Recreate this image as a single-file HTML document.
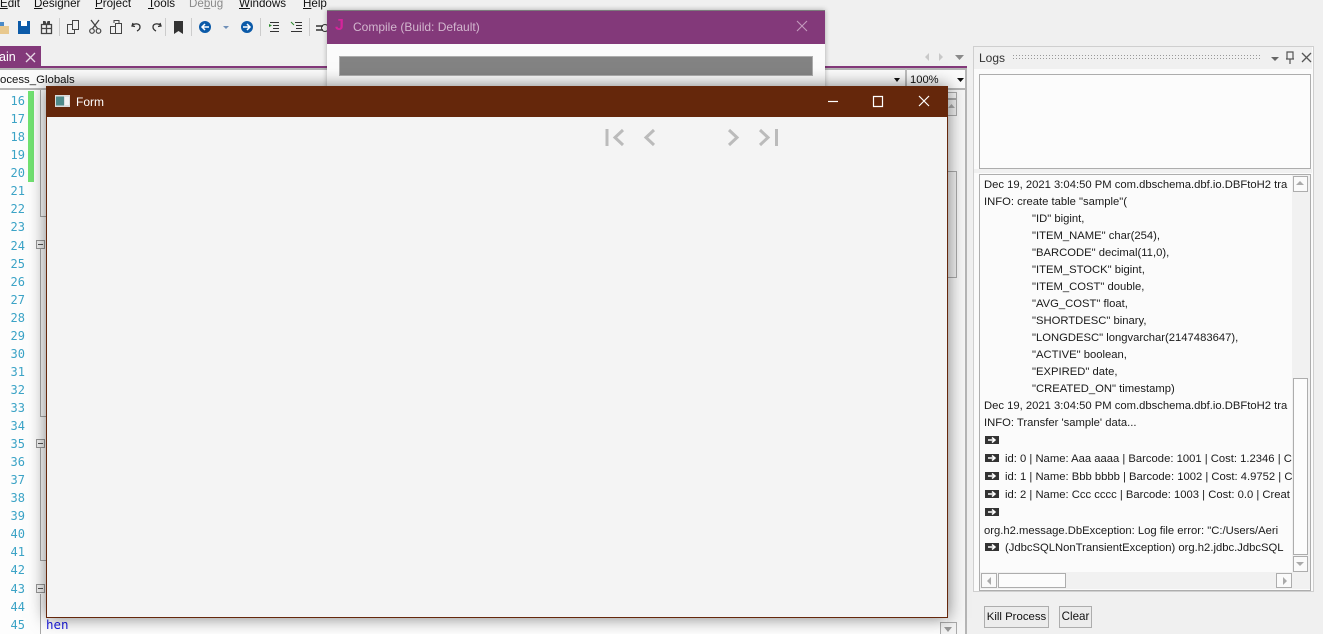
<!DOCTYPE html>
<html><head><meta charset="utf-8">
<style>
html,body{margin:0;padding:0;width:1323px;height:634px;overflow:hidden;background:#f0f0f0}
body{position:relative;font-family:"Liberation Sans",sans-serif;font-size:11.6px;color:#111}
.a,.t{position:absolute}
.t{white-space:pre;line-height:16px}
.n{position:absolute;left:0;width:25px;text-align:right;font-family:"DejaVu Sans Mono","Liberation Mono",monospace;font-size:12px;line-height:16px;color:#3ba3c6}
.l{position:absolute;white-space:pre;font-size:11.25px;line-height:16px;color:#1a1a1a}
.k{position:absolute;left:985px;width:14px;height:8px;background:#333;color:#fff}
.k svg{display:block}
.fold{position:absolute;left:36px;width:7px;height:7px;border:1px solid #999;background:#f4f4f4}
.fold:after{content:"";position:absolute;left:1px;right:1px;top:3px;height:1px;background:#555}
.v{position:absolute;left:40px;width:1px;background:#a8a8a8}
.h{position:absolute;left:40px;width:6px;height:1px;background:#a8a8a8}
</style></head><body>

<!-- menu -->
<div class="t" style="left:0;top:-4px"><u>E</u>dit</div>
<div class="t" style="left:34px;top:-4px"><u>D</u>esigner</div>
<div class="t" style="left:95px;top:-4px"><u>P</u>roject</div>
<div class="t" style="left:148px;top:-4px"><u>T</u>ools</div>
<div class="t" style="left:189px;top:-4px;color:#8a8a8a">De<u>b</u>ug</div>
<div class="t" style="left:239px;top:-4px"><u>W</u>indows</div>
<div class="t" style="left:303px;top:-4px"><u>H</u>elp</div>

<!-- toolbar -->
<svg class="a" style="left:0;top:16px" width="330" height="24" viewBox="0 0 330 24">
<path d="M0 10h9v8H0z" fill="#e8c88e"/><path d="M0 6h4v4H0z" fill="#4a8ac8"/>
<path d="M18 5h12v13H18z" fill="#0b5aa8"/><path d="M21 5h6v5h-6z" fill="#fff"/>
<path d="M41.500 8.500h10v9h-10zM46.500 8.500v9M41.500 12.500h10" fill="none" stroke="#444" stroke-width="1.300"/><path d="M43 5h2.500l1 3h-3.500zM50 5h-2.500l-1 3h3.500z" fill="#444"/>
<path d="M67.500 8.500h7v9h-7z" fill="none" stroke="#444"/><path d="M72.500 4.500h6v9h-6z" fill="#f0f0f0" stroke="#444"/>
<path d="M91 4l6.500 8.500M99 4l-6.500 8.500" stroke="#444" stroke-width="1.300"/><circle cx="92" cy="15" r="2.300" fill="none" stroke="#444" stroke-width="1.200"/><circle cx="98.500" cy="15" r="2.300" fill="none" stroke="#444" stroke-width="1.200"/>
<path d="M110.500 10.500h5v7h-5zM115.500 7.500h6v10h-6z" fill="none" stroke="#444"/><path d="M114 7V4.500h5V7" fill="none" stroke="#444"/>
<path d="M133 7l-1 3 3 .5M132 10c2-3 8-3 8 1 0 2-1 3-3 4" fill="none" stroke="#333" stroke-width="1.300"/>
<path d="M160 7l1 3-3 .5M161 10c-2-3-8-3-8 1 0 2 1 3 3 4" fill="none" stroke="#333" stroke-width="1.300"/>
<path d="M59.500 2v18M165.500 2v18M191.500 2v18M260.500 2v18M309.500 2v18" stroke="#ccc"/>
<path d="M174 5h9v13l-4.500-3-4.500 3z" fill="#333"/>
<circle cx="205" cy="11" r="6" fill="#0b5aa8"/><path d="M209 11h-7M205 8l-3 3 3 3" fill="none" stroke="#fff" stroke-width="1.500"/>
<path d="M223 10h6l-3 3z" fill="#6f8fb8"/>
<circle cx="247" cy="11" r="6" fill="#0b5aa8"/><path d="M243 11h7M247 8l3 3-3 3" fill="none" stroke="#fff" stroke-width="1.500"/>
<path d="M270 6.500h9M273 9.500h6M273 12.500h6M270 15.500h9" stroke="#333"/><path d="M269 8l3 1.500-3 1.500z" fill="#2a8a2a"/>
<path d="M295 6.500h7M296 9.500h6M296 12.500h6M291 15.500h11" stroke="#333"/><path d="M291 6l3 3" stroke="#2a8a2a"/>
<path d="M316 10h7M316 14h7" stroke="#333" stroke-width="1.500"/><circle cx="325" cy="12" r="3.500" fill="none" stroke="#333"/>
</svg>

<!-- tab strip -->
<div class="a" style="left:0;top:46px;width:41px;height:20px;background:#83397a"></div>
<div class="t" style="left:-1px;top:49px;color:#fff;font-size:12.5px">ain</div>
<svg class="a" style="left:25px;top:52px" width="11" height="11"><path d="M1 1l9 9M10 1l-9 9" stroke="#e8d8e6" stroke-width="1.300"/></svg>
<div class="a" style="left:0;top:66px;width:967px;height:2px;background:#83397a"></div>
<div class="a" style="left:0;top:68px;width:967px;height:2px;background:#b5b5b5"></div>
<svg class="a" style="left:920px;top:50px" width="46" height="14"><path d="M9 3v8l-4-4zM19 3v8l4-4z" fill="#c8c8c8"/><path d="M35 5h9l-4.500 5z" fill="#8a8a8a"/></svg>

<!-- combo row -->
<div class="a" style="left:0;top:70px;width:967px;height:20px;background:#fbfbfb"></div>
<div class="t" style="left:0;top:72px;font-size:11.4px">ocess_Globals</div>
<div class="a" style="left:905px;top:69px;width:2px;height:21px;background:#bdbdbd"></div>
<div class="t" style="left:910px;top:72px;font-size:11.2px">100%</div>
<svg class="a" style="left:892px;top:76px" width="76" height="8"><path d="M2 2h6l-3 4zM65 2h7l-3.500 4z" fill="#111"/></svg>

<!-- editor -->
<div class="a" style="left:0;top:90px;width:967px;height:544px;background:#fdfdfd"></div>
<div class="a" style="left:0;top:88px;width:967px;height:2px;background:#b5b5b5"></div>
<div class="a" style="left:28px;top:91px;width:6px;height:91px;background:#72e272"></div>
<div class="v" style="top:90px;height:127px"></div>
<div class="h" style="top:216px"></div>
<div class="v" style="top:249px;height:168px"></div>
<div class="h" style="top:416px"></div>
<div class="v" style="top:448px;height:113px"></div>
<div class="h" style="top:560px"></div>
<div class="v" style="top:594px;height:40px"></div>
<div class="fold" style="top:240px"></div>
<div class="fold" style="top:439px"></div>
<div class="fold" style="top:584px"></div>
<div class="n" style="top:93px">16</div><div class="n" style="top:111px">17</div><div class="n" style="top:129px">18</div><div class="n" style="top:147px">19</div><div class="n" style="top:165px">20</div><div class="n" style="top:183px">21</div><div class="n" style="top:201px">22</div><div class="n" style="top:219px">23</div><div class="n" style="top:238px">24</div><div class="n" style="top:256px">25</div><div class="n" style="top:274px">26</div><div class="n" style="top:292px">27</div><div class="n" style="top:310px">28</div><div class="n" style="top:328px">29</div><div class="n" style="top:346px">30</div><div class="n" style="top:364px">31</div><div class="n" style="top:382px">32</div><div class="n" style="top:400px">33</div><div class="n" style="top:418px">34</div><div class="n" style="top:436px">35</div><div class="n" style="top:454px">36</div><div class="n" style="top:472px">37</div><div class="n" style="top:490px">38</div><div class="n" style="top:508px">39</div><div class="n" style="top:526px">40</div><div class="n" style="top:544px">41</div><div class="n" style="top:562px">42</div><div class="n" style="top:581px">43</div><div class="n" style="top:599px">44</div><div class="n" style="top:617px">45</div>
<div class="t" style="left:46px;top:617px;font-family:'DejaVu Sans Mono',monospace;font-size:12.5px;color:#1a1ae0">hen</div>

<!-- editor right scrollbar area -->
<div class="a" style="left:947px;top:90px;width:20px;height:544px;background:#f6f6f6"></div>
<div class="a" style="left:940px;top:92px;width:15px;height:5px;border:1px solid #aaa;background:#f4f4f4"></div>
<div class="a" style="left:940px;top:99px;width:15px;height:15px;border:1px solid #aaa;background:#efefef"></div>
<svg class="a" style="left:948px;top:102px" width="8" height="8"><path d="M0 6h7l-3.500-4z" fill="#aaa"/></svg>
<div class="a" style="left:940px;top:171px;width:15px;height:105px;border:1px solid #aaa;background:#f1f1f1"></div>
<div class="a" style="left:940px;top:622px;width:15px;height:12px;border:1px solid #aaa;background:#f4f4f4"></div>
<svg class="a" style="left:943px;top:626px" width="10" height="8"><path d="M1 1h8L5 6z" fill="#999"/></svg>
<div class="a" style="left:965px;top:68px;width:2px;height:566px;background:#b5b5b5"></div>

<!-- Compile window -->
<div class="a" style="left:327px;top:10px;width:498px;height:85px;background:#fbfbfb;box-shadow:0 0 5px rgba(0,0,0,.3)"></div>
<div class="a" style="left:327px;top:10px;width:498px;height:34px;background:#83397a;border-top:1px solid #7c7c7c;box-sizing:border-box"></div>
<div class="t" style="left:335px;top:18px;color:#d4259b;font-weight:bold;font-size:16px">J</div>
<div class="t" style="left:353px;top:19px;color:#d2b6ce;font-size:12px">Compile (Build: Default)</div>
<svg class="a" style="left:796px;top:20px" width="12" height="12"><path d="M1 1l10 10M11 1L1 11" stroke="#c39abd" stroke-width="1.100"/></svg>
<div class="a" style="left:339px;top:56px;width:474px;height:20px;background:#838383;border:1px solid #adadad;box-sizing:border-box"></div>

<!-- Logs panel -->
<div class="a" style="left:973px;top:46px;width:339px;height:544px;background:#fbfbfb;border:1px solid #cfcfcf"></div>
<div class="a" style="left:974px;top:47px;width:338px;height:22px;background:#f0f0f0"></div>
<div class="t" style="left:979px;top:50px;font-size:12px;color:#333">Logs</div>
<svg class="a" style="left:1013px;top:55px" width="249" height="6"><defs><pattern id="d" width="3" height="3" patternUnits="userSpaceOnUse"><rect width="1" height="1" fill="#999"/></pattern></defs><rect width="249" height="6" fill="url(#d)"/></svg>
<svg class="a" style="left:1268px;top:50px" width="44" height="16"><path d="M3 7h8l-4 4z" fill="#666"/><path d="M19 2h6v7h-6zM22 9v5M18 9h8" fill="none" stroke="#555" stroke-width="1.200"/><path d="M34 3l9 9M43 3l-9 9" stroke="#555" stroke-width="1.300"/></svg>
<div class="a" style="left:979px;top:74px;width:330px;height:93px;background:#fcfcfc;border:1px solid #adadad"></div>
<div class="a" style="left:974px;top:169px;width:338px;height:4px;background:#f0f0f0"></div>
<div class="a" style="left:979px;top:174px;width:330px;height:415px;background:#fbfbfb;border:1px solid #adadad"></div>

<div class="l" style="left:984px;top:177px">Dec 19, 2021 3:04:50 PM com.dbschema.dbf.io.DBFtoH2 tra</div>
<div class="l" style="left:984px;top:194px">INFO: create table "sample"(</div>
<div class="l" style="left:1032px;top:211px">"ID" bigint,</div>
<div class="l" style="left:1032px;top:228px">"ITEM_NAME" char(254),</div>
<div class="l" style="left:1032px;top:245px">"BARCODE" decimal(11,0),</div>
<div class="l" style="left:1032px;top:262px">"ITEM_STOCK" bigint,</div>
<div class="l" style="left:1032px;top:279px">"ITEM_COST" double,</div>
<div class="l" style="left:1032px;top:296px">"AVG_COST" float,</div>
<div class="l" style="left:1032px;top:313px">"SHORTDESC" binary,</div>
<div class="l" style="left:1032px;top:330px">"LONGDESC" longvarchar(2147483647),</div>
<div class="l" style="left:1032px;top:347px">"ACTIVE" boolean,</div>
<div class="l" style="left:1032px;top:364px">"EXPIRED" date,</div>
<div class="l" style="left:1032px;top:381px">"CREATED_ON" timestamp)</div>
<div class="l" style="left:984px;top:398px">Dec 19, 2021 3:04:50 PM com.dbschema.dbf.io.DBFtoH2 tra</div>
<div class="l" style="left:984px;top:415px">INFO: Transfer 'sample' data...</div>
<div class="k" style="top:436px"><svg width="14" height="8"><path d="M3 4h7M7 1.500L10 4 7 6.500" fill="none" stroke="#fff" stroke-width="1.500"/></svg></div>
<div class="k" style="top:454px"><svg width="14" height="8"><path d="M3 4h7M7 1.500L10 4 7 6.500" fill="none" stroke="#fff" stroke-width="1.500"/></svg></div>
<div class="l" style="left:1005px;top:451px">id: 0 | Name: Aaa aaaa | Barcode: 1001 | Cost: 1.2346 | C</div>
<div class="k" style="top:472px"><svg width="14" height="8"><path d="M3 4h7M7 1.500L10 4 7 6.500" fill="none" stroke="#fff" stroke-width="1.500"/></svg></div>
<div class="l" style="left:1005px;top:469px">id: 1 | Name: Bbb bbbb | Barcode: 1002 | Cost: 4.9752 | C</div>
<div class="k" style="top:490px"><svg width="14" height="8"><path d="M3 4h7M7 1.500L10 4 7 6.500" fill="none" stroke="#fff" stroke-width="1.500"/></svg></div>
<div class="l" style="left:1005px;top:487px">id: 2 | Name: Ccc cccc | Barcode: 1003 | Cost: 0.0 | Creat</div>
<div class="k" style="top:508px"><svg width="14" height="8"><path d="M3 4h7M7 1.500L10 4 7 6.500" fill="none" stroke="#fff" stroke-width="1.500"/></svg></div>
<div class="l" style="left:984px;top:523px">org.h2.message.DbException: Log file error: "C:/Users/Aeri</div>
<div class="k" style="top:543px"><svg width="14" height="8"><path d="M3 4h7M7 1.500L10 4 7 6.500" fill="none" stroke="#fff" stroke-width="1.500"/></svg></div>
<div class="l" style="left:1005px;top:540px">(JdbcSQLNonTransientException) org.h2.jdbc.JdbcSQL</div>

<!-- log vertical scrollbar -->
<div class="a" style="left:1292px;top:175px;width:18px;height:398px;background:#f1f1f1"></div>
<div class="a" style="left:1293px;top:176px;width:13px;height:14px;border:1px solid #adadad;background:#fafafa"></div>
<svg class="a" style="left:1295px;top:179px" width="10" height="8"><path d="M1 6h8L5 2z" fill="#aaa"/></svg>
<div class="a" style="left:1293px;top:378px;width:13px;height:175px;border:1px solid #adadad;background:#fcfcfc"></div>
<div class="a" style="left:1293px;top:556px;width:13px;height:14px;border:1px solid #adadad;background:#fafafa"></div>
<svg class="a" style="left:1295px;top:560px" width="10" height="8"><path d="M1 2h8L5 6z" fill="#aaa"/></svg>
<!-- log horizontal scrollbar -->
<div class="a" style="left:980px;top:572px;width:330px;height:17px;background:#f1f1f1"></div>
<div class="a" style="left:981px;top:573px;width:14px;height:13px;border:1px solid #adadad;background:#fafafa"></div>
<svg class="a" style="left:985px;top:576px" width="8" height="10"><path d="M6 1v8L2 5z" fill="#aaa"/></svg>
<div class="a" style="left:998px;top:573px;width:66px;height:13px;border:1px solid #adadad;background:#fcfcfc"></div>
<div class="a" style="left:1276px;top:573px;width:14px;height:13px;border:1px solid #adadad;background:#fafafa"></div>
<svg class="a" style="left:1281px;top:576px" width="8" height="10"><path d="M2 1v8l4-4z" fill="#aaa"/></svg>

<!-- buttons -->
<div class="a" style="left:984px;top:606px;width:63px;height:20px;border:1px solid #adadad;background:#ececec;text-align:center;line-height:20px;font-size:11.4px;color:#111">Kill Process</div>
<div class="a" style="left:1059px;top:606px;width:31px;height:20px;border:1px solid #adadad;background:#ececec;text-align:center;line-height:20px;font-size:11.6px;color:#111">Clear</div>

<!-- Form window -->
<div class="a" style="left:46px;top:86px;width:902px;height:532px;background:#f4f4f4;border:solid #65270b;border-width:0 1px 1px 1px;box-sizing:border-box;box-shadow:0 0 16px rgba(0,0,0,.5)"></div>
<div class="a" style="left:46px;top:86px;width:902px;height:31px;background:#65270b"></div>
<svg class="a" style="left:55px;top:94px" width="16" height="14"><rect width="15" height="12" y="1" fill="#dcdcdc"/><rect x="1" y="2.500" width="8" height="9" fill="#4f8a8a"/><rect x="10" y="3" width="4" height="8" fill="#f2f2f2"/></svg>
<div class="t" style="left:76px;top:94px;color:#fff;font-size:12px">Form</div>
<svg class="a" style="left:820px;top:90px" width="120" height="22"><path d="M8 11.500h10" stroke="#fff" stroke-width="1.200"/><path d="M53.500 6.500h9v10h-9z" fill="none" stroke="#fff" stroke-width="1.200"/><path d="M99 6l10 10M109 6L99 16" stroke="#fff" stroke-width="1.200"/></svg>
<svg class="a" style="left:600px;top:124px" width="185" height="26" fill="none" stroke="#bbb" stroke-width="3"><path d="M7 5v17M23 6l-8 7.500 8 7.500M54 6l-8 7.500 8 7.500M129 6l8 7.500-8 7.500M160 6l8 7.500-8 7.500M176.500 5v17"/></svg>

</body></html>
